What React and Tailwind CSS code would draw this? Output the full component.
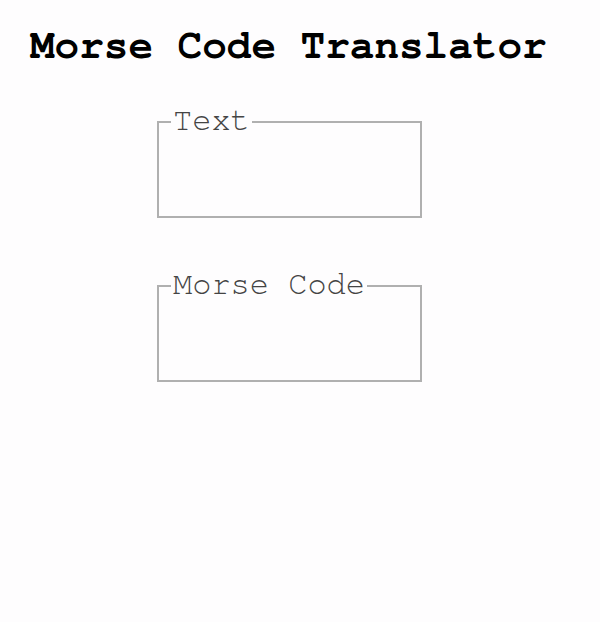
export default function App() {
  return (
    <div className="min-h-[622px] bg-[#fefdfe] pt-[22px] font-['FreeMono','Courier_New',monospace]">
      <h1 className="pl-[30px] text-[41px] font-bold leading-[48px] text-black">
        Morse Code Translator
      </h1>

      <div className="ml-[157px] mt-[33px] flex w-[265px] flex-col gap-[49px]">
        <fieldset className="border-2 border-[#b0b0b0] px-[12px]">
          <legend className="px-[2px] pb-[4px] text-[32px] leading-[34px] text-[#444]">Text</legend>
          <div className="h-[75px]" />
        </fieldset>

        <fieldset className="border-2 border-[#b0b0b0] px-[12px]">
          <legend className="px-[2px] pb-[4px] text-[32px] leading-[34px] text-[#444]">Morse Code</legend>
          <div className="h-[75px]" />
        </fieldset>
      </div>
    </div>
  )
}
